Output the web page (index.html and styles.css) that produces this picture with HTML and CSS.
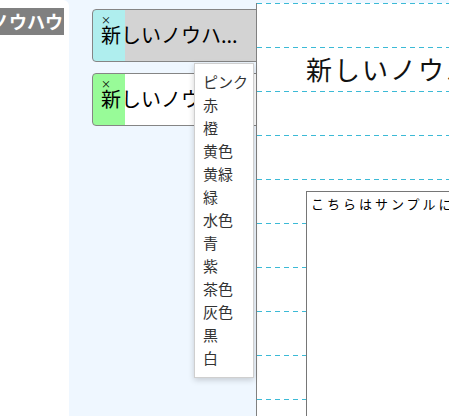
FILE: index.html
```html
<!DOCTYPE html>
<html lang="ja">
<head>
<meta charset="utf-8">
<title>ノウハウ</title>
<link rel="stylesheet" href="styles.css">
</head>
<body>
  <aside class="side">
    <div class="label"><span>ノウハウ</span></div>
  </aside>
  <nav class="tabs">
    <div class="tab tab-cyan">
      <div class="close">×</div>
      <div class="title">新しいノウハ...</div>
    </div>
    <div class="tab tab-green">
      <div class="close">×</div>
      <div class="title">新しいノウハ...</div>
    </div>
  </nav>
  <main class="page">
    <h1 class="heading">新しいノウハウ</h1>
    <textarea class="body-text">こちらはサンプルになります。</textarea>
  </main>
  <ul class="menu">
    <li>ピンク</li>
    <li>赤</li>
    <li>橙</li>
    <li>黄色</li>
    <li>黄緑</li>
    <li>緑</li>
    <li>水色</li>
    <li>青</li>
    <li>紫</li>
    <li>茶色</li>
    <li>灰色</li>
    <li>黒</li>
    <li>白</li>
  </ul>
</body>
</html>
```

FILE: styles.css
```css
* {
  box-sizing: border-box;
}

html, body {
  margin: 0;
  padding: 0;
}

body {
  width: 449px;
  height: 416px;
  display: flex;
  overflow: hidden;
  background: #eff7ff;
  font-family: "Noto Sans CJK JP", "Noto Sans", sans-serif;
  color: #111;
}

.side {
  width: 69px;
  flex: none;
  background: #fff;
  border-top-right-radius: 6px;
  overflow: hidden;
}

.label {
  width: 64px;
  height: 27px;
  margin-top: 8px;
  background: #808080;
  display: flex;
  justify-content: flex-end;
  overflow: hidden;
}

.label span {
  flex: none;
  color: #fff;
  font-weight: bold;
  font-size: 18px;
  line-height: 27px;
  padding-right: 1px;
  white-space: nowrap;
}

.tabs {
  width: 187px;
  flex: none;
  padding: 9px 0 0 23px;
  overflow: hidden;
  display: flex;
  flex-direction: column;
  gap: 11px;
}

.tab {
  width: 180px;
  height: 53px;
  flex: none;
  border: 1px solid #858585;
  border-radius: 4px;
}

.tab-cyan {
  background: linear-gradient(to right, #afeeee 32px, #d3d3d3 32px);
}

.tab-green {
  background: linear-gradient(to right, #98fb98 32px, #fff 32px);
}

.close {
  margin-top: 6px;
  padding-left: 8px;
  font-size: 10px;
  line-height: 8px;
  color: #000;
}

.title {
  padding-left: 8px;
  font-size: 20px;
  line-height: 22px;
  white-space: nowrap;
  color: #000;
}

.page {
  flex: 1;
  min-width: 0;
  margin-top: 3px;
  border-left: 1px solid #808080;
  padding-left: 49px;
  overflow: hidden;
  background-color: #fff;
  background-image: url("data:image/svg+xml,%3Csvg xmlns='http://www.w3.org/2000/svg' width='9' height='44' shape-rendering='crispEdges'%3E%3Crect x='0' y='0' width='5' height='1' fill='%233cbad6'/%3E%3C/svg%3E");
  background-repeat: repeat;
}

.heading {
  margin: 44px 0 0;
  height: 44px;
  font-size: 26px;
  font-weight: normal;
  line-height: 44px;
  letter-spacing: 2px;
  white-space: nowrap;
  color: #111;
}

.body-text {
  display: block;
  margin-top: 100px;
  width: 320px;
  height: 260px;
  padding: 2px 4px;
  border: 1px solid #767676;
  border-radius: 0;
  resize: none;
  background: #fff;
  font-family: "Noto Sans CJK JP", sans-serif;
  font-size: 13px;
  letter-spacing: 3px;
  color: #000;
}

.menu {
  position: absolute;
  left: 194px;
  top: 63px;
  width: 60px;
  margin: 0;
  padding: 6px 0 8px 8px;
  list-style: none;
  background: #fff;
  border: 1px solid #cfcfcf;
  box-shadow: 0 2px 6px rgba(0, 0, 0, 0.18);
}

.menu li {
  font-size: 15px;
  line-height: 23px;
  color: #333;
  white-space: nowrap;
}
```
